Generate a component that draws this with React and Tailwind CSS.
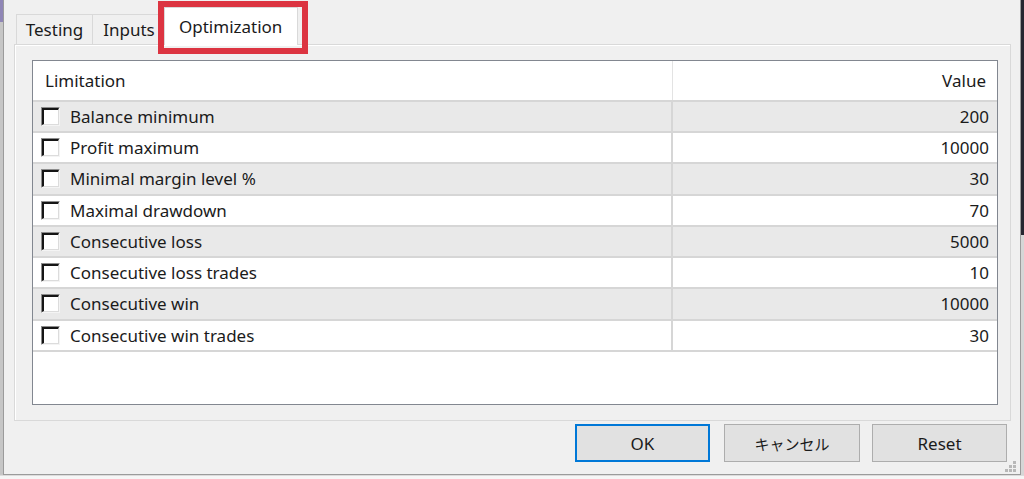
const rows = [
  { label: "Balance minimum", value: "200", h: "h-[31px]", shade: true },
  { label: "Profit maximum", value: "10000", h: "h-[31px]", shade: false },
  { label: "Minimal margin level %", value: "30", h: "h-[32px]", shade: true },
  { label: "Maximal drawdown", value: "70", h: "h-[31px]", shade: false },
  { label: "Consecutive loss", value: "5000", h: "h-[31px]", shade: true },
  { label: "Consecutive loss trades", value: "10", h: "h-[31px]", shade: false },
  { label: "Consecutive win", value: "10000", h: "h-[32px]", shade: true },
  { label: "Consecutive win trades", value: "30", h: "h-[31px]", shade: false },
];

const CheckBox = () => (
  <span className="w-[19px] h-[19px] flex border-l border-t border-[#8c8c8c] border-r border-b border-r-[#f4f4f4] border-b-[#f4f4f4]">
    <span className="flex-1 bg-white border-l-2 border-t-2 border-[#151515] border-r border-b border-r-[#dcdcdc] border-b-[#dcdcdc]" />
  </span>
);

const Row = ({ row }) => (
  <div className={`grid grid-cols-[640px_1fr] border-t-2 border-[#d6d6d6] ${row.h} ${row.shade ? "bg-[#e9e9e9]" : "bg-white"}`}>
    <div className="flex items-center gap-[10px] pl-[8px] pb-[1px] border-r-2 border-[#d6d6d6]">
      <CheckBox />
      <span>{row.label}</span>
    </div>
    <div className="flex items-center justify-end pr-[8px] pb-[1px]">{row.value}</div>
  </div>
);

const Grip = () => (
  <div className="absolute right-[4px] bottom-[2px] grid grid-cols-3 gap-[1px] w-[11px]">
    <span />
    <span />
    <span className="w-[3px] h-[3px] bg-[#b8b8b8]" />
    <span />
    <span className="w-[3px] h-[3px] bg-[#b8b8b8]" />
    <span className="w-[3px] h-[3px] bg-[#b8b8b8]" />
    <span className="w-[3px] h-[3px] bg-[#b8b8b8]" />
    <span className="w-[3px] h-[3px] bg-[#b8b8b8]" />
    <span className="w-[3px] h-[3px] bg-[#b8b8b8]" />
  </div>
);

export default function App() {
  return (
    <div className="w-[1024px] h-[479px] overflow-hidden flex flex-col bg-[#e6e6e6] text-[17px] text-[#1b1b1b] font-['Noto_Sans','Noto_Sans_CJK_JP',sans-serif] leading-none">
      <div className="flex h-[475px]">
        {/* bits of the window behind */}
        <div className="w-[3px] flex flex-col">
          <div className="h-[22px] bg-[#8f86b6]" />
          <div className="flex-1 bg-[#c6c6c6]" />
        </div>

        <div className="relative w-[1018px] flex flex-col bg-[#f0f0f0] border-l border-r border-b border-[#9b9b9b] pl-[10px] pr-[9px]">
          {/* tabs */}
          <div className="h-[44px] flex items-end pl-[2px]">
            <div className="w-[77px] h-[30px] flex items-center justify-center bg-[#f0f0f0] border border-b-0 border-[#d9d9d9]">
              Testing
            </div>
            <div className="w-[73px] h-[30px] flex items-center justify-center bg-[#f0f0f0] border border-l-0 border-b-0 border-[#d9d9d9]">
              Inputs
            </div>
            <div className="relative z-10 -ml-[2px] w-[134px] h-[38px] -mb-[1px] flex items-center pl-[14px] pb-[1px] bg-white border border-b-0 border-[#d9d9d9]">
              Optimization
            </div>
          </div>

          {/* tab page */}
          <div className="h-[377px] flex flex-col border border-[#d9d9d9] bg-[#f0f0f0] shadow-[inset_1px_1px_0_#ffffff] pl-[17px] pt-[15px]">
            <div className="w-[966px] h-[345px] border border-[#828790] bg-white flex flex-col">
              <div className="grid grid-cols-[640px_1fr] h-[39px]">
                <div className="flex items-center pl-[12px] border-r border-[#e3e3e3]">Limitation</div>
                <div className="flex items-center justify-end pr-[11px]">Value</div>
              </div>
              {rows.map((row) => (
                <Row key={row.label} row={row} />
              ))}
              <div className="border-t-2 border-[#d6d6d6]" />
            </div>
          </div>

          {/* buttons */}
          <div className="flex justify-end mt-[3px] pr-[4px]">
            <button className="w-[135px] h-[38px] flex items-center justify-center bg-[#e1e1e1] border-2 border-[#0078d7]">
              OK
            </button>
            <button className="ml-[14px] w-[136px] h-[38px] flex items-center justify-center bg-[#e1e1e1] border border-[#adadad] text-[15px] font-['Noto_Sans_CJK_JP',sans-serif]">
              キャンセル
            </button>
            <button className="ml-[12px] w-[135px] h-[38px] flex items-center justify-center bg-[#e1e1e1] border border-[#adadad]">
              Reset
            </button>
          </div>

          <Grip />

          {/* highlight box round the active tab */}
          <div className="absolute left-[154px] top-[1px] w-[150px] h-[53px] border-[6px] border-[#dc3441] z-20" />
        </div>

        <div className="w-[3px] flex flex-col">
          <div className="h-[235px] bg-[#262630]" />
          <div className="flex-1 bg-[#d6d6d6]" />
        </div>
      </div>
      <div className="flex-1 bg-[#f6f6f6] border-t border-[#dcdcdc]" />
    </div>
  );
}
